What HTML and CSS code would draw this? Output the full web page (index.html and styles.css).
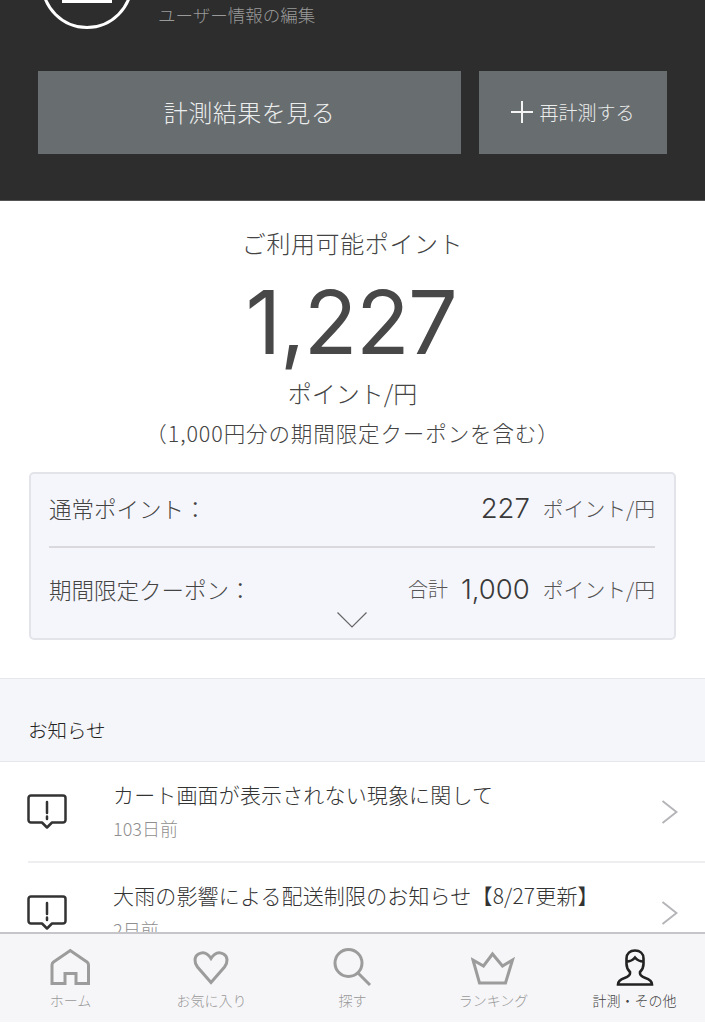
FILE: index.html
```html
<!DOCTYPE html>
<html lang="ja">
<head>
<meta charset="utf-8">
<title>計測・その他</title>
<link rel="stylesheet" href="styles.css">
</head>
<body>
<div class="page">
  <header class="hero">
    <div class="profile">
      <div class="avatar"><span class="avatar-chest"></span></div>
      <div class="edit">ユーザー情報の編集</div>
    </div>
    <div class="actions">
      <a class="btn btn-main"><span class="btn-text">計測結果を見る</span></a>
      <a class="btn btn-sub"><svg class="plus" viewBox="0 0 22 22"><path d="M0 11h22M11 0v22"/></svg><span class="btn-text">再計測する</span></a>
    </div>
  </header>

  <section class="points">
    <div class="points-label">ご利用可能ポイント</div>
    <div class="points-value">1,227</div>
    <div class="points-unit">ポイント/円</div>
    <div class="points-note">（1,000円分の期間限定クーポンを含む）</div>
    <div class="breakdown">
      <div class="row row-first">
        <span class="row-label">通常ポイント：</span>
        <span class="row-right"><b class="num">227</b><span class="unit">ポイント/円</span></span>
      </div>
      <div class="row row-second">
        <span class="row-label">期間限定クーポン：</span>
        <span class="row-right"><span class="total">合計</span><b class="num">1,000</b><span class="unit">ポイント/円</span></span>
      </div>
      <svg class="expand" viewBox="0 0 30 16"><path d="M.5.5 15 15 29.500.5"/></svg>
    </div>
  </section>

  <section class="news">
    <h2 class="news-head">お知らせ</h2>
    <ul class="news-list">
      <li class="news-item">
        <svg class="notice" viewBox="0 0 40 36"><path d="M4 1.500h32a2.500 2.500 0 0 1 2.500 2.500v22a2.500 2.500 0 0 1-2.500 2.500H25l-5 5-5-5H4A2.500 2.500 0 0 1 1.500 26V4A2.500 2.500 0 0 1 4 1.500Z"/><path class="mark" d="M20 8v11M20 22.500v2.500"/></svg>
        <div class="news-body">
          <div class="news-title">カート画面が表示されない現象に関して</div>
          <div class="news-date">103日前</div>
        </div>
        <svg class="chev" viewBox="0 0 17 24"><path d="M1.500 1 15.500 12 1.500 23"/></svg>
      </li>
      <li class="news-item">
        <svg class="notice" viewBox="0 0 40 36"><path d="M4 1.500h32a2.500 2.500 0 0 1 2.500 2.500v22a2.500 2.500 0 0 1-2.500 2.500H25l-5 5-5-5H4A2.500 2.500 0 0 1 1.500 26V4A2.500 2.500 0 0 1 4 1.500Z"/><path class="mark" d="M20 8v11M20 22.500v2.500"/></svg>
        <div class="news-body">
          <div class="news-title">大雨の影響による配送制限のお知らせ【8/27更新】</div>
          <div class="news-date">2日前</div>
        </div>
        <svg class="chev" viewBox="0 0 17 24"><path d="M1.500 1 15.500 12 1.500 23"/></svg>
      </li>
    </ul>
  </section>

  <nav class="tabs">
    <a class="tab">
      <svg class="tab-icon" viewBox="0 0 42 40"><path d="M2 35.500V17q0-2 1.500-3L20.250 2.500 37 14q1.500 1 1.500 3v18.500H26V25.500H15v10Z"/></svg>
      <span>ホーム</span>
    </a>
    <a class="tab">
      <svg class="tab-icon" viewBox="0 0 42 40"><path d="M20 34.500 6.500 19C3 14.500 3 8.500 7.500 6S16.500 5 20 10.500C23.500 5 28 3.500 32.500 6S37 14.500 33.500 19Z"/></svg>
      <span>お気に入り</span>
    </a>
    <a class="tab">
      <svg class="tab-icon" viewBox="0 0 42 40"><circle cx="16.500" cy="15" r="13.500"/><path d="M26 25 38 37"/></svg>
      <span>探す</span>
    </a>
    <a class="tab">
      <svg class="tab-icon tab-icon-wide" viewBox="0 0 46 40"><path d="M2 12 12.500 18 21.500 6 31.500 18 41.500 12 34.500 35H8.500Z"/></svg>
      <span>ランキング</span>
    </a>
    <a class="tab tab-active">
      <svg class="tab-icon" viewBox="0 0 42 40"><path d="M21 2.500c-5 0-8.500 3-8.500 8v5.500c0 3.500 1.500 6 3.500 8v1.500c0 2-1.500 3-5.500 4.500-3.500 1.200-6.500 3-6.500 6.500h34c0-3.500-3-5.300-6.500-6.500-4-1.500-5.500-2.500-5.500-4.500V24c2-2 3.500-4.500 3.500-8v-5.500c0-5-3.500-8-8.500-8Z"/><path d="M12.500 13.500c4 0 6.500-1.500 8.500-4 2 2.500 4.500 4 8.500 4"/></svg>
      <span>計測・その他</span>
    </a>
  </nav>
</div>
</body>
</html>
```

FILE: styles.css
```css
* { box-sizing: border-box; }
html, body { margin: 0; padding: 0; height: 1024px; overflow: hidden; background: #fff; }
body {
  font-family: "Noto Sans CJK JP", "Noto Sans", sans-serif;
  font-weight: 300;
  color: #3a3a3a;
}
.page { width: 705px; height: 1024px; overflow: hidden; position: relative; }

.hero { height: 201px; background: #2d2d2d; padding: 0 38px; border-bottom: 1px solid #555; overflow: hidden; }
.profile { height: 71px; display: flex; align-items: flex-start; position: relative; }
.avatar {
  flex: none; width: 92px; height: 92px; margin: -63px 0 0 3px; border: 3px solid #fff; border-radius: 50%;
  display: flex; justify-content: center; align-items: flex-end; background: #2d2d2d; padding-bottom: 23px;
}
.avatar-chest { width: 50px; height: 20px; background: #fff; }
.edit { margin: 3px 0 0 25px; font-size: 17.500px; line-height: 24px; color: #9a9a9a; }
.actions { display: flex; gap: 18px; }
.btn { height: 83px; background: #686d70; color: #eceded; display: flex; align-items: center; justify-content: center; }
.btn-text { margin-top: -3px; }
.btn-main { width: 423px; font-size: 24px; letter-spacing: .5px; }
.btn-sub { width: 188px; font-size: 19px; gap: 6px; }
.plus { width: 22px; height: 22px; fill: none; stroke: #f4f4f4; stroke-width: 2; margin-top: -2px; }

.points { padding: 25px 29px 0; text-align: center; }
.points-label { font-size: 24px; line-height: 34px; color: #444; letter-spacing: .6px; }
.points-value { font-family: Inter, sans-serif; font-weight: 400; font-size: 88px; line-height: 100px; color: #484848; margin-top: 12px; padding-right: 3px; letter-spacing: -1.500px; }
.points-unit { font-size: 24px; line-height: 34px; margin-top: 4px; color: #444; }
.points-note { font-size: 21.500px; line-height: 30px; margin-top: 8px; color: #444; letter-spacing: .9px; }
.breakdown { position: relative; height: 168px; margin-top: 24px; padding: 0 19px 0 18px; background: #f5f6fb; border: 2px solid #e3e4ea; border-radius: 5px; text-align: left; }
.row { display: flex; justify-content: space-between; align-items: center; }
.row-first { height: 74px; padding-bottom: 4px; border-bottom: 2px solid #d9d9de; }
.row-second { height: 81px; }
.row-label { font-size: 22.500px; color: #444; }
.row-right { display: flex; align-items: center; }
.num { font-family: Inter, sans-serif; font-weight: 300; font-size: 27.500px; color: #3a3a3a; }
.unit { font-size: 20.800px; margin-left: 13px; color: #555; }
.total { font-size: 20px; margin-right: 13px; color: #555; }
.expand { position: absolute; left: 306px; bottom: 10px; width: 30px; height: 16px; fill: none; stroke: #666; stroke-width: 1.200; }

.news { margin-top: 38px; background: #f5f6f9; border-top: 1px solid #e6e6ec; }
.news-head { margin: 0; height: 82px; padding: 37px 0 0 28px; font-size: 19.500px; line-height: 28px; font-weight: 300; color: #222; }
.news-list { list-style: none; margin: 0; padding: 0 0 0 28px; background: #fff; border-top: 1px solid #e6e6ec; }
.news-item { position: relative; height: 101px; display: flex; align-items: center; border-bottom: 2px solid #eeeef1; }
.notice { flex: none; width: 40px; height: 36px; margin-left: -1px; fill: none; stroke: #333; stroke-width: 2.500; stroke-linejoin: round; }
.mark { stroke-linecap: round; }
.news-body { flex: 1; margin-left: 46px; padding-bottom: 3px; }
.news-title { font-size: 21px; line-height: 30px; color: #333; letter-spacing: .15px; }
.news-date { font-size: 18px; line-height: 26px; margin-top: 6px; color: #8f8f8f; }
.chev { flex: none; width: 17px; height: 24px; margin-right: 27px; fill: none; stroke: #b5b5b9; stroke-width: 2; }

.tabs { position: absolute; left: 0; right: 0; top: 932px; height: 90px; background: #f6f6f8; border-top: 2px solid #c6c6ca; display: grid; grid-template-columns: repeat(5, 141px); }
.tab { display: flex; flex-direction: column; align-items: center; padding-top: 14px; font-size: 14px; line-height: 20px; color: #999; }
.tab-icon { width: 42px; height: 40px; margin-bottom: 2px; fill: none; stroke: #9c9c9c; stroke-width: 3; }
.tab-icon-wide { width: 46px; }
.tab-active { color: #444; }
.tab-active .tab-icon { stroke: #222; stroke-width: 2.600; }
```
